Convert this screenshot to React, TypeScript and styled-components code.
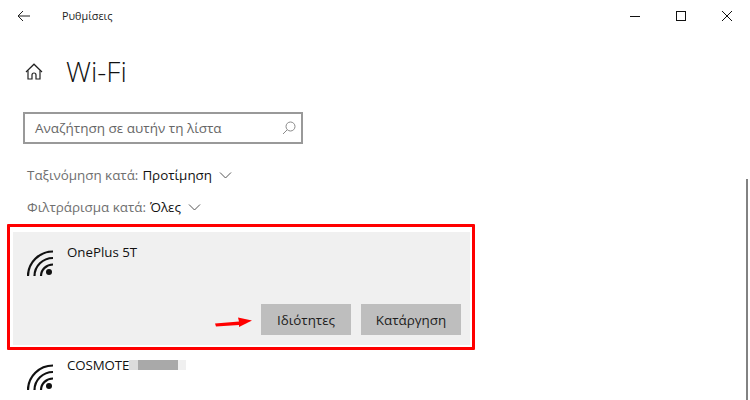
import styled, { createGlobalStyle } from "styled-components";

const GlobalStyle = createGlobalStyle`
  html, body {
    margin: 0;
    padding: 0;
    background: #ffffff;
  }
`;

const Page = styled.div`
  position: relative;
  width: 750px;
  height: 400px;
  overflow: hidden;
  background: #ffffff;
  font-family: "Open Sans", "Noto Sans", sans-serif;
  color: #111111;
`;

const TitleBar = styled.div`
  display: flex;
  align-items: center;
  height: 31px;
  padding-left: 17px;
`;

const AppName = styled.span`
  margin-left: 32px;
  font-size: 10.8px;
  color: #222222;
`;

const WindowControls = styled.div`
  display: flex;
  align-items: center;
  gap: 36px;
  margin-left: auto;
  padding-right: 18px;
`;

const Header = styled.div`
  display: flex;
  align-items: center;
  height: 50px;
  margin-top: 15px;
  padding-left: 25px;
  gap: 23px;
`;

const Title = styled.h1`
  margin: 0;
  font-size: 28px;
  font-weight: 300;
  color: #111111;
`;

const SearchBox = styled.div`
  display: flex;
  align-items: center;
  justify-content: space-between;
  box-sizing: border-box;
  width: 280px;
  height: 32px;
  margin: 16px 0 0 23px;
  padding: 0 5px 0 10px;
  border: 2px solid #999999;
  font-size: 13.5px;
  color: #666666;
`;

const FilterRow = styled.div<{ $top: number }>`
  display: flex;
  align-items: center;
  height: 20px;
  margin: ${({ $top }) => $top}px 0 0 27px;
  font-size: 13.4px;
  color: #6f6f6f;
`;

const FilterValue = styled.span`
  margin-left: 4px;
  margin-right: 7px;
  color: #111111;
`;

const HighlightFrame = styled.div`
  position: relative;
  box-sizing: border-box;
  width: 468px;
  height: 126px;
  margin: 7px 0 0 7px;
  padding: 5px 2px 2px 3px;
  border: 3px solid #ff0000;
  border-radius: 1px;
`;

const SelectedNetwork = styled.div`
  display: flex;
  flex-direction: column;
  box-sizing: border-box;
  height: 100%;
  padding: 11px 9px 10px 14px;
  background: #f0f0f0;
`;

const NetworkRow = styled.div`
  display: flex;
  align-items: flex-start;
  gap: 14px;
`;

const NetworkName = styled.span`
  font-size: 13.3px;
  line-height: 18px;
  color: #111111;
`;

const Actions = styled.div`
  display: flex;
  justify-content: flex-end;
  gap: 10px;
  margin-top: auto;
`;

const ActionButton = styled.button<{ $width: number }>`
  width: ${({ $width }) => $width}px;
  height: 31px;
  padding: 0;
  border: none;
  background: #bebebe;
  font-family: inherit;
  font-size: 13.4px;
  color: #1c1c1c;
`;

const Arrow = styled.svg`
  position: absolute;
  left: 205px;
  top: 90px;
`;

const OtherNetwork = styled.div`
  display: flex;
  align-items: flex-start;
  gap: 14px;
  margin: 7px 0 0 27px;
`;

const RedactedName = styled.span`
  display: inline-flex;
  align-items: center;
  margin-top: -1px;
  font-size: 13.3px;
  line-height: 18px;
  letter-spacing: -0.1px;
  color: #111111;
`;

const Blur = styled.span<{ $width: number; $color: string }>`
  display: inline-block;
  width: ${({ $width }) => $width}px;
  height: 10px;
  background: ${({ $color }) => $color};
`;

const Scrollbar = styled.div`
  position: absolute;
  top: 179px;
  right: 2px;
  bottom: 0;
  width: 2px;
  background: #828282;
`;

const WifiGlyph = styled.svg`
  flex-shrink: 0;
  margin-top: 7px;
`;

const WifiIcon = () => (
  <WifiGlyph width="26" height="26" viewBox="0 0 26 26" fill="none" stroke="#111111" strokeWidth="2.2">
    <path d="M1 26A25 24.5 0 0 1 26 1.5" />
    <path d="M7.5 26A18.5 18 0 0 1 26 8" />
    <path d="M14 26A12 11.5 0 0 1 26 14.5" />
    <circle cx="22" cy="22" r="3" fill="#111111" stroke="none" />
  </WifiGlyph>
);

export default function App() {
  return (
    <Page>
      <GlobalStyle />
      <TitleBar>
        <svg width="13" height="12" viewBox="0 0 13 12" fill="none" stroke="#222222" strokeWidth="1">
          <path d="M13 6H1M6 1L1 6l5 5" />
        </svg>
        <AppName>Ρυθμίσεις</AppName>
        <WindowControls>
          <svg width="10" height="10" viewBox="0 0 10 10" stroke="#111111" strokeWidth="1">
            <path d="M0 5.5h10" />
          </svg>
          <svg width="10" height="10" viewBox="0 0 10 10" fill="none" stroke="#111111" strokeWidth="1">
            <rect x="0.5" y="0.5" width="9" height="9" />
          </svg>
          <svg width="10" height="10" viewBox="0 0 10 10" stroke="#111111" strokeWidth="1">
            <path d="M0 0l10 10M10 0L0 10" />
          </svg>
        </WindowControls>
      </TitleBar>

      <Header>
        <svg width="18" height="17" viewBox="0 0 18 17" fill="none" stroke="#222222" strokeWidth="1.2">
          <path d="M1 9L9 1.2 17 9" />
          <path d="M3 7.5V16h4v-4a2 2 0 0 1 4 0v4h4V7.5" />
        </svg>
        <Title>Wi-Fi</Title>
      </Header>

      <SearchBox>
        <span>Αναζήτηση σε αυτήν τη λίστα</span>
        <svg width="14" height="14" viewBox="0 0 14 14" fill="none" stroke="#8a8a8a" strokeWidth="1">
          <circle cx="8.5" cy="5.5" r="4.5" />
          <path d="M5.2 8.8L1 13" />
        </svg>
      </SearchBox>

      <FilterRow $top={21}>
        Ταξινόμηση κατά:
        <FilterValue>Προτίμηση</FilterValue>
        <svg width="13" height="7" viewBox="0 0 13 7" fill="none" stroke="#555555" strokeWidth="1">
          <path d="M1 0.5l5.5 5.5L12 0.5" />
        </svg>
      </FilterRow>

      <FilterRow $top={12}>
        Φιλτράρισμα κατά:
        <FilterValue>Όλες</FilterValue>
        <svg width="13" height="7" viewBox="0 0 13 7" fill="none" stroke="#555555" strokeWidth="1">
          <path d="M1 0.5l5.5 5.5L12 0.5" />
        </svg>
      </FilterRow>

      <HighlightFrame>
        <SelectedNetwork>
          <NetworkRow>
            <WifiIcon />
            <NetworkName>OnePlus 5T</NetworkName>
          </NetworkRow>
          <Actions>
            <ActionButton $width={90}>Ιδιότητες</ActionButton>
            <ActionButton $width={100}>Κατάργηση</ActionButton>
          </Actions>
        </SelectedNetwork>
        <Arrow width="38" height="10" viewBox="0 0 38 10">
          <path d="M0 6.5L1 9.5 24 8 24 10 37 3.5 23 0.5 24 4.5Z" fill="#ff0000" />
        </Arrow>
      </HighlightFrame>

      <OtherNetwork>
        <WifiIcon />
        <RedactedName>
          COSMOTE
          <Blur $width={9} $color="#dcdcdc" />
          <Blur $width={40} $color="#a9a9a9" />
          <Blur $width={8} $color="#f0f0f0" />
        </RedactedName>
      </OtherNetwork>

      <Scrollbar />
    </Page>
  );
}
